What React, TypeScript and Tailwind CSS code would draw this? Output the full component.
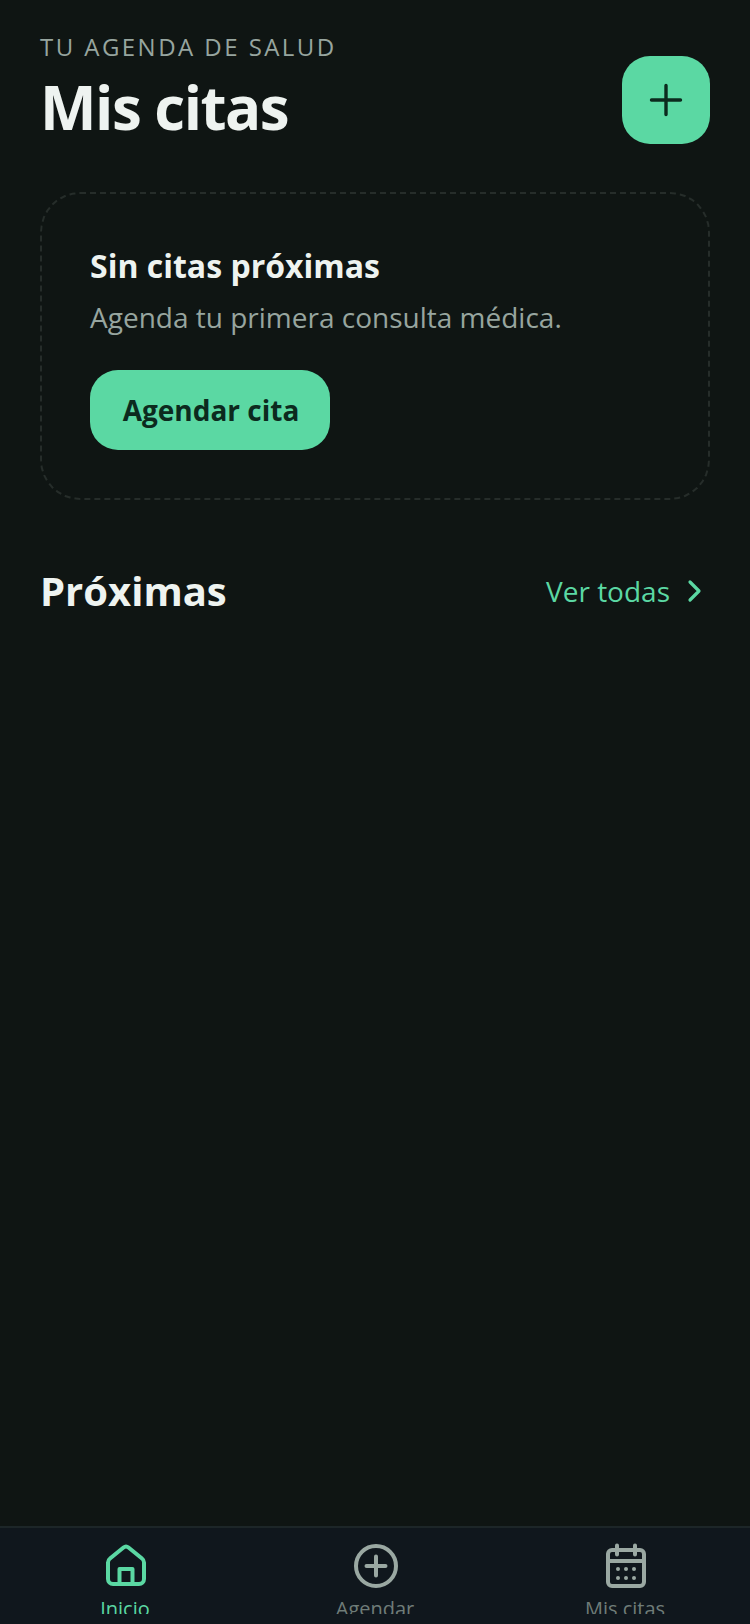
import React from "react";

function Tab({ label, active, children }: { label: string; active?: boolean; children: React.ReactNode }) {
  return (
    <div className="flex flex-1 flex-col items-center">
      <div className={active ? "ml-[2px] h-[48px] w-[48px] text-[#5bd8a3]" : "ml-[2px] h-[48px] w-[48px] text-[#9aa8a2]"}>{children}</div>
      <span className={active ? "mt-[4px] text-[20px] leading-[30px] text-[#5bd8a3]" : "mt-[4px] text-[20px] leading-[30px] text-[#6f7c78]"}>{label}</span>
    </div>
  );
}

export default function App() {
  return (
    <div className="flex h-[1624px] w-[750px] flex-col overflow-hidden bg-[#0f1513] font-['Open_Sans',sans-serif]">
      <main className="flex-1 px-[40px] pt-[32px]">
        <header className="flex items-start justify-between">
          <div>
            <div className="text-[24px] leading-[30px] tracking-[2.45px] text-[#97a59f]">TU AGENDA DE SALUD</div>
            <h1 className="mt-[8px] text-[60px] leading-[74px] font-bold tracking-[-1.5px] text-[#eef3f0]">Mis citas</h1>
          </div>
          <button className="mt-[24px] flex h-[88px] w-[88px] items-center justify-center rounded-[28px] bg-[#5bd8a3]">
            <svg width="40" height="40" viewBox="0 0 40 40" fill="none" stroke="#0c2a1e" strokeWidth="3.4" strokeLinecap="round">
              <path d="M20 5.500v29M5.500 20h29" />
            </svg>
          </button>
        </header>

        <section className="mt-[48px] rounded-[40px] border-2 border-dashed border-[#262d2a] p-[48px]">
          <h2 className="text-[32px] leading-[48px] font-bold text-[#eef3f0]">Sin citas próximas</h2>
          <p className="mt-[8px] text-[28px] leading-[38px] text-[#97a59f]">Agenda tu primera consulta médica.</p>
          <button className="mt-[34px] flex h-[80px] w-[240px] items-center justify-center rounded-[28px] bg-[#5bd8a3] pl-[2px] text-[28px] font-bold text-[#0c2a1e]">Agendar cita</button>
        </section>

        <section className="mt-[63px] flex items-center justify-between">
          <h2 className="text-[40px] leading-[56px] font-bold text-[#eef3f0]">Próximas</h2>
          <div className="flex items-center gap-[8px] text-[28px] text-[#5bd8a3]">
            <span>Ver todas</span>
            <svg width="32" height="32" viewBox="0 0 32 32" fill="none" stroke="currentColor" strokeWidth="3.2" strokeLinecap="round" strokeLinejoin="round">
              <path d="M12 7l9 9-9 9" />
            </svg>
          </div>
        </section>
      </main>

      <nav className="h-[98px] shrink-0 border-t-2 border-[#1d2628] bg-[#10171d] pt-[14px]">
        <div className="flex h-[72px] overflow-hidden">
          <Tab label="Inicio" active>
            <svg viewBox="0 0 48 48" fill="none" stroke="currentColor" strokeWidth="4" strokeLinejoin="round">
              <path d="M21.500 5.500a4 4 0 0 1 5 0L40 16.500a5 5 0 0 1 2 4V37a5 5 0 0 1-5 5H11a5 5 0 0 1-5-5V20.500a5 5 0 0 1 2-4z" />
              <path d="M17.500 42V27h13v15" />
            </svg>
          </Tab>
          <Tab label="Agendar">
            <svg viewBox="0 0 48 48" fill="none" stroke="currentColor" strokeWidth="4" strokeLinecap="round">
              <circle cx="24" cy="24" r="20" />
              <path d="M24 14.500v19M14.500 24h19" />
            </svg>
          </Tab>
          <Tab label="Mis citas">
            <svg viewBox="0 0 48 48" fill="none" stroke="currentColor" strokeWidth="4" strokeLinecap="round" strokeLinejoin="round">
              <rect x="6" y="8" width="36" height="36" rx="4" />
              <path d="M6 19h36M15 3.500v9M33 3.500v9" />
              <g fill="currentColor" stroke="none">
                <circle cx="16" cy="27" r="2" /><circle cx="24" cy="27" r="2" /><circle cx="32" cy="27" r="2" />
                <circle cx="16" cy="36" r="2" /><circle cx="24" cy="36" r="2" /><circle cx="32" cy="36" r="2" />
              </g>
            </svg>
          </Tab>
        </div>
      </nav>
    </div>
  );
}
